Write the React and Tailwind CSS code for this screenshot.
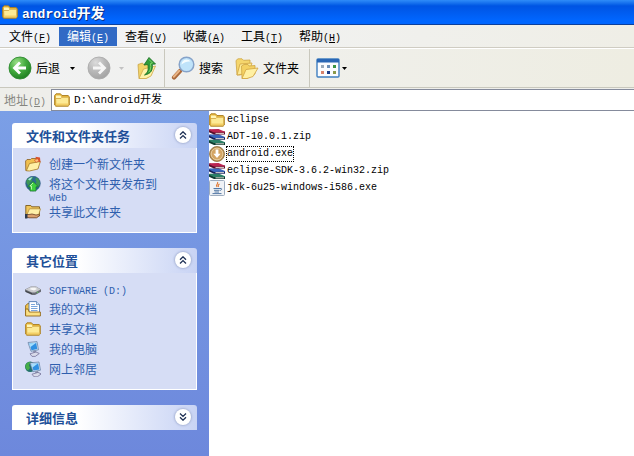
import { useState } from 'react';
import clsx from 'clsx';

const menus = [
  { label: '文件', hotkey: 'F' },
  { label: '编辑', hotkey: 'E', active: true },
  { label: '查看', hotkey: 'V' },
  { label: '收藏', hotkey: 'A' },
  { label: '工具', hotkey: 'T' },
  { label: '帮助', hotkey: 'H' },
];

const tasks = [
  { label: '创建一个新文件夹', icon: NewFolderIcon },
  { label: '将这个文件夹发布到 Web', icon: PublishIcon },
  { label: '共享此文件夹', icon: ShareIcon },
];

const places = [
  { label: 'SOFTWARE (D:)', icon: DriveIcon },
  { label: '我的文档', icon: DocumentsIcon },
  { label: '共享文档', icon: FolderIcon },
  { label: '我的电脑', icon: ComputerIcon },
  { label: '网上邻居', icon: NetworkIcon },
];

const files = [
  { name: 'eclipse', icon: FolderIcon },
  { name: 'ADT-10.0.1.zip', icon: ArchiveIcon },
  { name: 'android.exe', icon: InstallerIcon, focused: true },
  { name: 'eclipse-SDK-3.6.2-win32.zip', icon: ArchiveIcon },
  { name: 'jdk-6u25-windows-i586.exe', icon: JavaIcon },
];

// Latin runs are half the width of a CJK glyph, so they get a smaller mono size
function Latin({ size = 'text-[10px]', children }) {
  return <span className={clsx("font-['Liberation_Mono',monospace] leading-[0]", size)}>{children}</span>;
}

function Mixed({ children, size }) {
  return children.split(/([\x21-\x7e]+(?: [\x21-\x7e]+)*)/).filter(Boolean).map((part, i) => (
    /^[\x21-\x7e]/.test(part) ? <Latin key={i} size={size}>{part}</Latin> : part
  ));
}

function FolderIcon({ className = 'size-4' }) {
  return (
    <svg viewBox="0 0 16 16" className={className} aria-hidden="true">
      <path d="M.6 3.500 2 1.800h4.500L8 3.500h6l1.300 1.200V13l-1.200 1.200H1.800L.6 13z" fill="#e9b93e" stroke="#a87d20" strokeWidth=".9" />
      <path d="M2 3.500h4.300l1.200 1.500h6.700V12H2z" fill="#fff6b8" />
      <path d="M1.600 6.500h5.200l1-1.200h6.900v7.700l-.8.700H1.900z" fill="#fdea94" stroke="#c7962f" strokeWidth=".7" />
      <path d="M2.300 11.500h12v1.700h-12z" fill="#f3cf66" />
    </svg>
  );
}

function NewFolderIcon() {
  return (
    <svg viewBox="0 0 16 16" className="size-4" aria-hidden="true">
      <path d="M.6 5 2 3.500h3.500l1-1H13V12l-9 2.500H.8z" fill="#f0c050" stroke="#8a5f25" strokeWidth=".8" />
      <path d="M1.300 14.800 4.500 7.500l10.800-2L13 13l-8.500 2z" fill="#fff0a5" stroke="#a5782a" strokeWidth=".8" />
      <path d="m10.500.8 4.500.7.500 5-2-1-2.500 1-2-2.500 2-.8z" fill="#d9532c" />
      <path d="m10 4.300 2.500-1.300 1 2-2.500 1z" fill="#ffc37c" />
    </svg>
  );
}

function PublishIcon() {
  return (
    <svg viewBox="0 0 16 16" className="size-4" aria-hidden="true">
      <circle cx="8" cy="7.500" r="7.300" fill="#2c6a90" stroke="#24517c" strokeWidth=".6" />
      <path d="M1.500 4.500C3 1.500 6 .8 8 1c1 1-2 2-1 3s-3 3-3 5c-2 0-3-2-2.500-4.500zM11 1.500c3 1 4.300 4 4 6.500-1 3-3 3-4 1s1-2 0-4-.5-2.500 0-3.500z" fill="#3d9655" />
      <path d="M3 3.500c1-1.500 3-2.500 4.500-2.300L5 4.500z" fill="#a8e4e6" />
      <path d="m8 5.500 5.500 5.300H11V15H5v-4.200H2.500z" fill="#3fcf3f" stroke="#1d7a33" strokeWidth=".8" />
      <path d="M8 7 5 10h1.500v3.500" fill="none" stroke="#c4f7b0" strokeWidth=".9" />
    </svg>
  );
}

function ShareIcon() {
  return (
    <svg viewBox="0 0 16 16" className="size-4" aria-hidden="true">
      <path d="M.8 1.500h5l1 1.300h7.700V12H.8z" fill="#f0c65c" stroke="#7c5a1c" strokeWidth=".9" />
      <path d="M2 10.500 4.500 4.800h11L13 13H3z" fill="#fff0a8" stroke="#aa8230" strokeWidth=".7" />
      <path d="M1 10.500h3l3-.5 4 1 2.500-.5 1 1-3 2.300H4L1 13z" fill="#dba06c" stroke="#6b3f24" strokeWidth=".8" />
      <path d="M0 10h2.500v4.500H0z" fill="#2e3a4d" />
    </svg>
  );
}

function DriveIcon() {
  return (
    <svg viewBox="0 0 16 16" className="size-4" aria-hidden="true">
      <path d="M0 8.500 6 5.500h5l5 3v2.300L10 14H7l-7-3.200z" fill="#6a6d75" />
      <path d="m.3 8.400 6-2.800H11l4.700 2.900L10 11.400H7z" fill="#c9cacd" />
      <path d="m4 8 3-1.300h3l2 1.300-3 1.500z" fill="#f7f7f7" />
      <path d="m1 10 6 2.300v1l-6-2.400z" fill="#3c3f46" />
      <circle cx="12.500" cy="11.200" r=".8" fill="#65c164" />
    </svg>
  );
}

function DocumentsIcon() {
  return (
    <svg viewBox="0 0 16 16" className="size-4" aria-hidden="true">
      <path d="M.6 4.500 3 2.500h3V14H.6z" fill="#f2c550" stroke="#93691a" strokeWidth=".9" />
      <path d="M4 .6h7.500l3 3V13H4z" fill="#fff" stroke="#4f7ab3" strokeWidth=".9" />
      <path d="M11.500.6v3h3" fill="#c9def5" stroke="#4f7ab3" strokeWidth=".7" />
      <path d="M6 3.500h4M6 5.500h6.500M6 7.500h6.500M6 9.500h6.500" stroke="#6b9cd8" strokeWidth=".9" />
      <path d="M.6 8H3l1.200 3h11.200v4H.6z" fill="#fbe084" stroke="#93691a" strokeWidth=".9" />
    </svg>
  );
}

function Monitor() {
  return (
    <>
      <path d="M3 1.500 12 .6l1.500 8.200L6 10.300z" fill="#cfe0f0" stroke="#5b7ba0" strokeWidth=".7" />
      <path d="m4.200 2.500 7-.7 1.100 6.200-5.800 1.200z" fill="#2f90e2" />
      <path d="m4.200 2.500 7-.7-6 4.500z" fill="#a5defc" />
      <path d="m8 10 3-.5.500 2.500h-3z" fill="#8a93ad" />
      <path d="m5 12.800 6-1.800 3.300 1.500-4 2.900H7z" fill="#d9dbea" stroke="#76749a" strokeWidth=".8" />
    </>
  );
}

function ComputerIcon() {
  return (
    <svg viewBox="0 0 16 16" className="size-4" aria-hidden="true">
      <Monitor />
    </svg>
  );
}

function NetworkIcon() {
  return (
    <svg viewBox="0 0 16 16" className="size-4" aria-hidden="true">
      <circle cx="5.200" cy="5.700" r="5.200" fill="#23706c" />
      <path d="M.8 3.500c2-3 4-2.500 5-2.500L4 4l1 3-2 2.500C.8 8-.2 5.500.8 3.500z" fill="#46ad48" />
      <g transform="translate(2 .4)"><Monitor /></g>
    </svg>
  );
}

function ArchiveIcon() {
  return (
    <svg viewBox="0 0 16 16" className="size-4" aria-hidden="true">
      {[
        { y: 10.5, cover: '#2b7f66', dark: '#0f3b30' },
        { y: 5.3, cover: '#3a66bd', dark: '#171f58' },
        { y: 0, cover: '#bb2450', dark: '#560f2b' },
      ].map(({ y, cover, dark }) => (
        <g key={y} transform={`translate(0 ${y})`}>
          <path d="M0 .8 1 .2 5 2.900l11-.3v2.900H5L0 3.200z" fill={dark} />
          <path d="M.8.200 9.500 0 16 2.700v.7L5 3.600 0 1.200z" fill={cover} />
          <path d="M6.500 3.900H15v.9H6.500z" fill="#f3eee6" />
        </g>
      ))}
    </svg>
  );
}

function InstallerIcon() {
  return (
    <svg viewBox="0 0 16 16" className="size-4" aria-hidden="true">
      <circle cx="8" cy="8" r="7.500" fill="#b98c4c" stroke="#8c6d3f" strokeWidth=".8" />
      <circle cx="8" cy="8" r="5.900" fill="#d3a463" stroke="#ecd4a8" strokeWidth=".9" />
      <path d="M6.600 3.500h2.800v4.200h2.200L8 12 4.400 7.700h2.200z" fill="#fff" />
    </svg>
  );
}

function JavaIcon() {
  return (
    <svg viewBox="0 0 16 16" className="size-4" aria-hidden="true">
      <rect x=".5" y=".5" width="15" height="15" rx="1" fill="#eff2f6" stroke="#9dacbf" />
      <path d="M8.500 2c1.500 2-2.500 2.500-.5 5M10.500 4c-2 1-1.500 1.800-1 3" fill="none" stroke="#e0762f" strokeWidth="1.100" />
      <path d="M4.500 8.500h6.500M5 10.300h5.500M5.500 12h4.500M3.500 13.600h9M11 8.500c2.500-.5 2 1.500 0 2" fill="none" stroke="#5378a5" strokeWidth="1" />
    </svg>
  );
}

function ArrowDisc({ back }) {
  return (
    <svg viewBox="0 0 24 24" className="size-6" aria-hidden="true">
      <defs>
        <radialGradient id={back ? 'disc-back' : 'disc-next'} cx=".35" cy=".25" r=".8">
          <stop offset="0" stopColor={back ? '#9ade86' : '#dcdcdc'} />
          <stop offset=".5" stopColor={back ? '#45ad3f' : '#b9b9b9'} />
          <stop offset="1" stopColor={back ? '#1d7d20' : '#a2a2a2'} />
        </radialGradient>
      </defs>
      <circle cx="12" cy="12" r="11" fill={back ? 'url(#disc-back)' : 'url(#disc-next)'} stroke={back ? '#2f8a31' : '#acacac'} strokeWidth=".9" />
      <path
        d={back ? 'M18 12H7M12 6.500 6.500 12l5.500 5.500' : 'M6 12h11M12 6.500l5.500 5.500-5.500 5.500'}
        fill="none"
        stroke={back ? '#fff' : '#f6f6f6'}
        strokeWidth="2.800"
      />
    </svg>
  );
}

function UpFolderIcon() {
  return (
    <svg viewBox="0 0 20 24" className="h-6 w-5" aria-hidden="true">
      <path d="M2 8.500 6.500 7l1 1.500L15 7v12l-4 3-8 .5z" fill="#f3d468" stroke="#c8a346" strokeWidth=".8" />
      <path d="M3 22.500 7.500 13l12-3L15 20l-5 2.500z" fill="#fff2a8" stroke="#d0a94a" strokeWidth=".8" />
      <path d="m13 1.500 6.500 6.500-3.300.2c.8 6-1.200 9.500-7.700 10.800 3.500-2.500 4.300-5.500 3.300-10.500L8 9z" fill="#2f9c3a" stroke="#1f7426" strokeWidth=".9" />
      <path d="m13 3.500 3.500 3.500-2 .5c.8 4.500-.2 7-1.800 8.700" fill="none" stroke="#84d66c" strokeWidth="1" />
    </svg>
  );
}

function SearchIcon() {
  return (
    <svg viewBox="0 0 24 24" className="size-6" aria-hidden="true">
      <path d="m3 21.500 6-6.500" stroke="#a9683b" strokeWidth="4.200" strokeLinecap="round" />
      <path d="m2.800 20.800 5.500-6" stroke="#e9b484" strokeWidth="2" strokeLinecap="round" />
      <circle cx="15.500" cy="8.500" r="7.300" fill="#bfe3fa" stroke="#86a3c9" strokeWidth="1.500" />
      <path d="M10.500 8.500a5 5 0 0 1 5-5c2 0 3 .8 4 2-3-.5-6 .5-9 3z" fill="#f4fcff" />
    </svg>
  );
}

function FoldersIcon() {
  return (
    <svg viewBox="0 0 24 24" className="size-6" aria-hidden="true">
      <path d="M1 4.500 3 2.800h4l1.500 1.500L15 4v11L5 19H2z" fill="#f5d66c" stroke="#cda544" strokeWidth=".8" />
      <path d="M2 19 5 8l12-1-3 10z" fill="#fdeb98" stroke="#d0a341" strokeWidth=".8" />
      <path d="M6.500 10 9 8.500h4l1 1.500 6-.5V18l-8 4.500H7z" fill="#f4d162" stroke="#cda544" strokeWidth=".8" />
      <path d="m7 22.500 4-9 12-1.500-5 8.500-6 2z" fill="#fff0a2" stroke="#d0a341" strokeWidth=".8" />
    </svg>
  );
}

function ViewsIcon() {
  return (
    <svg viewBox="0 0 24 20" className="h-5 w-6" aria-hidden="true">
      <rect x="1" y="1" width="22" height="18" rx="1" fill="#fafcff" stroke="#3f7fc0" strokeWidth="1.400" />
      <path d="M1 1h22v3.500H1z" fill="#2a67b5" />
      <path d="M5 7h3v3H5z" fill="#9aaaba" />
      <path d="M11 7h3v3h-3z" fill="#6b8fb8" />
      <path d="M17 7h3v3h-3z" fill="#3a9445" />
      <path d="M5 13h3v3H5z" fill="#d8836c" />
      <path d="M11 13h3v3h-3z" fill="#1d3f8a" />
      <path d="M17 13h3v3h-3z" fill="#8a9a4a" />
    </svg>
  );
}

function Caret({ className = 'fill-black' }) {
  return (
    <svg viewBox="0 0 5 3" className={clsx('h-[3px] w-[5px]', className)} aria-hidden="true">
      <path d="M0 0h5L2.500 3z" />
    </svg>
  );
}

function Separator() {
  return <div className="h-full w-px bg-[#c9c8bd]" />;
}

function Panel({ title, items = [], defaultOpen = true }) {
  const [open, setOpen] = useState(defaultOpen);

  return (
    <section>
      <h2 className="flex h-[25px] items-center justify-between rounded-t-[3px] bg-linear-to-r from-white from-35% to-[#c8d3f4] pr-1.5 pl-3.5 text-[13px] font-bold text-[#215099]">
        {title}
        <button
          type="button"
          onClick={() => setOpen(!open)}
          aria-expanded={open}
          aria-label={title}
          className="mb-0.5 flex size-4 items-center justify-center rounded-full bg-white shadow-[0_0_2px_1px_#a9b5d6]"
        >
          <svg viewBox="0 0 8 8" className={clsx('size-2', !open && 'rotate-180')} aria-hidden="true">
            <path d="M1 3.700 4 .8l3 2.900M1 7.500l3-2.900 3 2.900" fill="none" stroke="#1e3054" strokeWidth="1.300" />
          </svg>
        </button>
      </h2>
      {open && (
        <ul className="border border-t-0 border-white bg-[#d6ddf5] pt-1.5 pr-8 pb-2.5 pl-3">
          {items.map(({ label, icon: Icon }) => (
            <li key={label}>
              <a href="#" className="flex min-h-5 items-start gap-2 pt-1 leading-3 text-[#2f5fae]">
                <span className="-mt-0.5 shrink-0"><Icon /></span>
                <span><Mixed>{label}</Mixed></span>
              </a>
            </li>
          ))}
        </ul>
      )}
    </section>
  );
}

export default function App() {
  return (
    <div className="flex min-h-screen flex-col bg-white font-['Noto_Sans_CJK_SC',sans-serif] text-xs text-black">
      <header className="flex h-[25px] items-center gap-1 border-b border-[#0b3f9c] bg-linear-to-b from-[#2f8cf8] via-[#0054e3] via-25% to-[#0066ff] to-85% pl-0.5">
        <FolderIcon />
        <h1 className="text-sm font-bold text-white [text-shadow:1px_1px_#0a2f86]">
          <Mixed size="text-[13px]">android开发</Mixed>
        </h1>
      </header>

      <nav className="flex h-[23px] items-center border-b border-[#cfccc2] bg-linear-to-r from-[#f2f4f8] to-[#efeee6] pl-px">
        {menus.map(({ label, hotkey, active }) => (
          <button
            key={hotkey}
            type="button"
            className={clsx('h-[19px] w-[58px] px-2 text-left whitespace-nowrap', active && 'bg-[#316ac5] text-white')}
          >
            {label}
            <Latin>(<u>{hotkey}</u>)</Latin>
          </button>
        ))}
      </nav>

      <div className="flex h-10 items-center border-t border-b border-t-white border-b-[#c9c8bd] bg-linear-to-r from-[#f1f2f3] to-[#eeede2] pl-2 whitespace-nowrap">
        <button type="button" className="flex items-center gap-1">
          <ArrowDisc back />
          后退
        </button>
        <button type="button" aria-label="后退" className="mr-3 ml-2.5">
          <Caret />
        </button>
        <button type="button" aria-label="前进" disabled className="flex items-center gap-2">
          <ArrowDisc />
          <Caret className="fill-[#c2c2c2]" />
        </button>
        <button type="button" aria-label="向上" className="mr-2 ml-3">
          <UpFolderIcon />
        </button>
        <Separator />
        <button type="button" className="ml-1.5 flex items-center gap-1">
          <SearchIcon />
          搜索
        </button>
        <button type="button" className="mr-2.5 ml-3 flex items-center gap-1">
          <FoldersIcon />
          文件夹
        </button>
        <Separator />
        <button type="button" aria-label="查看" className="ml-1.5 flex items-center gap-0.5">
          <ViewsIcon />
          <Caret />
        </button>
      </div>

      <div className="flex h-[23px] items-stretch bg-[#eeeeea] pt-px">
        <label htmlFor="address" className="flex w-[51px] shrink-0 items-center pl-1 text-[#868680]">
          <span>地址<Latin>(<u>D</u>)</Latin></span>
        </label>
        <div className="flex flex-1 items-center gap-1 border border-r-0 border-[#858b9c] bg-white pl-0.5">
          <FolderIcon />
          <input
            id="address"
            type="text"
            defaultValue="D:\android开发"
            className="min-w-0 flex-1 font-['Liberation_Mono','Noto_Sans_CJK_SC',monospace] text-[11px] outline-none"
          />
        </div>
      </div>

      <div className="flex flex-1">
        <aside className="flex w-[209px] shrink-0 flex-col gap-[15px] bg-linear-to-b from-[#7b9fe6] to-[#6d88dc] px-3 pt-3">
          <Panel title="文件和文件夹任务" items={tasks} />
          <Panel title="其它位置" items={places} />
          <Panel title="详细信息" defaultOpen={false} />
        </aside>

        <main className="flex-1">
          <ul>
            {files.map(({ name, icon: Icon, focused }) => (
              <li key={name}>
                <button type="button" className="flex h-[17px] items-center gap-px font-['Liberation_Mono',monospace] text-[10px] leading-3.5">
                  <Icon />
                  <span className={clsx('border border-dotted', focused ? 'border-black' : 'border-transparent')}>{name}</span>
                </button>
              </li>
            ))}
          </ul>
        </main>
      </div>
    </div>
  );
}
